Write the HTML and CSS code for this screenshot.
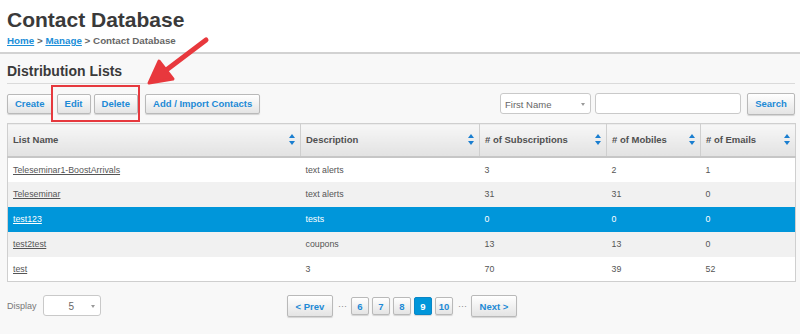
FILE: index.html
```html
<!DOCTYPE html>
<html lang="en">
<head>
  <meta charset="UTF-8" />
  <title>Contact Database</title>
  <link rel="stylesheet" href="styles.css">
</head>
<body>
  <div class="page-head">
    <h1>Contact Database</h1>
    <div class="crumbs"><a href="#">Home</a> &gt; <a href="#">Manage</a> &gt; Contact Database</div>
  </div>

  <div class="content">
    <h2>Distribution Lists</h2>

    <div class="toolbar">
      <div class="actions">
        <button class="btn">Create</button>
        <div class="group">
          <button class="btn">Edit</button>
          <button class="btn">Delete</button>
        </div>
        <button class="btn">Add / Import Contacts</button>
      </div>
      <div class="search">
        <div class="select field-select">First Name<span class="caret"></span></div>
        <div class="input"></div>
        <button class="btn">Search</button>
      </div>
    </div>

    <table class="grid">
      <colgroup>
        <col style="width:293px"><col style="width:179px"><col style="width:127px"><col style="width:94px"><col style="width:95px">
      </colgroup>
      <thead>
        <tr>
          <th><div class="th">List Name<span class="sort"><i class="up"></i><i class="down"></i></span></div></th>
          <th><div class="th">Description<span class="sort"><i class="up"></i><i class="down"></i></span></div></th>
          <th><div class="th"># of Subscriptions<span class="sort"><i class="up"></i><i class="down"></i></span></div></th>
          <th><div class="th"># of Mobiles<span class="sort"><i class="up"></i><i class="down"></i></span></div></th>
          <th><div class="th"># of Emails<span class="sort"><i class="up"></i><i class="down"></i></span></div></th>
        </tr>
      </thead>
      <tbody>
        <tr><td><a href="#">Teleseminar1-BoostArrivals</a></td><td>text alerts</td><td>3</td><td>2</td><td>1</td></tr>
        <tr><td><a href="#">Teleseminar</a></td><td>text alerts</td><td>31</td><td>31</td><td>0</td></tr>
        <tr class="selected"><td><a href="#">test123</a></td><td>tests</td><td>0</td><td>0</td><td>0</td></tr>
        <tr><td><a href="#">test2test</a></td><td>coupons</td><td>13</td><td>13</td><td>0</td></tr>
        <tr><td><a href="#">test</a></td><td>3</td><td>70</td><td>39</td><td>52</td></tr>
      </tbody>
    </table>

    <div class="footer">
      <div class="display">
        <span>Display</span>
        <div class="select size-select">5<span class="caret"></span></div>
      </div>
      <div class="pager">
        <button class="btn nav">&lt; Prev</button>
        <span class="dots">&middot;&middot;&middot;</span>
        <button class="btn page">6</button>
        <button class="btn page">7</button>
        <button class="btn page">8</button>
        <button class="btn page current">9</button>
        <button class="btn page">10</button>
        <span class="dots">&middot;&middot;&middot;</span>
        <button class="btn nav">Next &gt;</button>
      </div>
    </div>
  </div>

  <!-- annotation overlay -->
  <div class="highlight"></div>
  <svg class="arrow" width="80" height="60" viewBox="0 0 80 60">
    <line x1="63" y1="8" x2="22" y2="39" stroke="#e8383d" stroke-width="5" stroke-linecap="round"/>
    <polygon points="6,51 16,29 30,47" fill="#e8383d" stroke="#e8383d" stroke-width="3" stroke-linejoin="round"/>
  </svg>
</body>
</html>
```

FILE: styles.css
```css
* { box-sizing: border-box; }

body {
  margin: 0;
  font-family: "Liberation Sans", Arial, sans-serif;
  background: #f8f8f8;
  color: #555;
  width: 800px;
  height: 334px;
  overflow: hidden;
  position: relative;
}

.page-head {
  background: #fff;
  height: 54px;
  padding: 8px 7px 0;
  border-bottom: 2px solid #d2d2d2;
}

h1 {
  margin: 0;
  font-size: 21px;
  font-weight: bold;
  color: #3a3a3a;
  line-height: 24px;
}

.crumbs {
  margin-top: 3px;
  font-size: 9.8px;
  font-weight: bold;
  color: #666;
}

.crumbs a {
  color: #1b8ed8;
}

.content {
  padding: 0 5px 0 7px;
}

h2 {
  margin: 0;
  height: 30px;
  padding-top: 9px;
  font-size: 14px;
  font-weight: bold;
  color: #3a3a3a;
  border-bottom: 1px solid #dadada;
}

.toolbar {
  display: flex;
  justify-content: space-between;
  align-items: center;
  margin-top: 9px;
  height: 21px;
}

.actions, .search, .group {
  display: flex;
  align-items: center;
}

.group { gap: 3px; margin: 0 7px 0 4px; }

.btn {
  font-family: "Liberation Sans", Arial, sans-serif;
  font-size: 9.5px;
  font-weight: bold;
  color: #1d8ad6;
  height: 20px;
  padding: 0 7px;
  background: linear-gradient(#ffffff, #e4e4e4);
  border: 1px solid #b9b9b9;
  border-radius: 2px;
  box-shadow: 0 1px 1px rgba(0, 0, 0, 0.15);
}

.select, .input {
  height: 21px;
  background: #fff;
  border: 1px solid #c9c9c9;
  border-radius: 3px;
  position: relative;
  font-size: 9.5px;
  color: #666;
}

.field-select {
  width: 91px;
  padding: 5px 0 0 4px;
}

.caret {
  position: absolute;
  right: 5px;
  top: 9px;
  border-left: 2.5px solid transparent;
  border-right: 2.5px solid transparent;
  border-top: 3px solid #999;
}

.input {
  width: 146px;
  margin-left: 4px;
}

.search .btn {
  margin-left: 6px;
  height: 22px;
  width: 48px;
  padding: 0;
}

.grid {
  margin-top: 9px;
  width: 788px;
  border-collapse: collapse;
  table-layout: fixed;
  border: 1px solid #cfcfcf;
  font-size: 8.8px;
}

.grid th {
  height: 33px;
  padding: 0;
  background: linear-gradient(#f7f7f7, #e2e2e2);
  border-left: 1px solid #cfcfcf;
  border-bottom: 2px solid #c6c6c6;
  text-align: left;
  font-size: 9.5px;
  color: #505050;
}

.th {
  display: flex;
  align-items: center;
  justify-content: space-between;
  padding: 0 5px;
}

.sort {
  display: flex;
  flex-direction: column;
  gap: 3px;
}

.sort i {
  display: block;
  border-left: 3px solid transparent;
  border-right: 3px solid transparent;
}

.sort .up { border-bottom: 4px solid #1a7ed0; }
.sort .down { border-top: 4px solid #1a7ed0; }

.grid td {
  height: 25px;
  padding: 0 5px;
  color: #555;
  white-space: nowrap;
}

.grid tbody tr:nth-child(even) { background: #f1f1f1; }
.grid tbody tr:nth-child(odd) { background: #fff; }

.grid td a { color: #555; }

.grid tbody tr.selected { background: #0096da; }
.grid tr.selected td, .grid tr.selected a { color: #fff; }

.footer {
  position: relative;
  height: 52px;
  padding-top: 13px;
}

.display {
  display: flex;
  align-items: center;
  gap: 6px;
  font-size: 9px;
  color: #777;
}

.size-select {
  width: 58px;
  padding: 5px 0 0 25px;
  font-size: 10px;
}

.pager {
  position: absolute;
  top: 13px;
  left: 280px;
  display: flex;
  align-items: center;
  gap: 3px;
}

.pager .nav {
  height: 22px;
  width: 46px;
  padding: 0;
  font-size: 9.5px;
}

.pager .page {
  width: 18px;
  height: 18px;
  padding: 0;
  font-size: 9.5px;
}

.pager .current {
  background: #0096da;
  border-color: #0a86c6;
  color: #fff;
}

.dots {
  font-size: 9px;
  color: #888;
  padding: 0 1px 0 2px;
}

.highlight {
  position: absolute;
  left: 51px;
  top: 85px;
  width: 89px;
  height: 37px;
  border: 2px solid #e6393e;
}

.arrow {
  position: absolute;
  left: 143px;
  top: 32px;
}
```
